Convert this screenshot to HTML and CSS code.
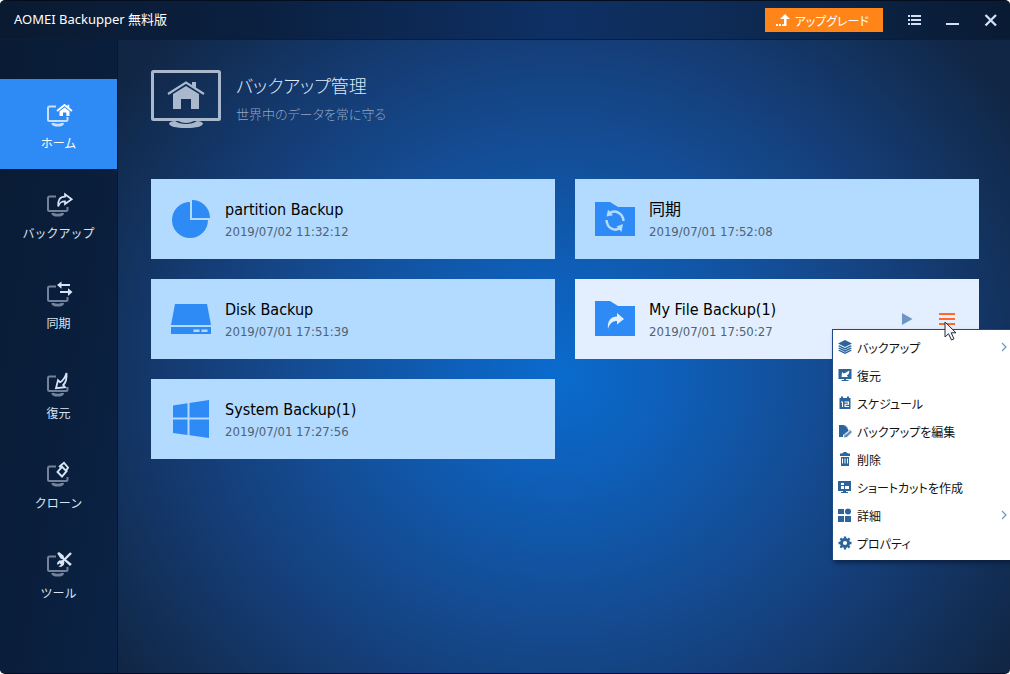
FILE: index.html
```
<!DOCTYPE html>
<html lang="ja">
<head>
<meta charset="utf-8">
<meta name="viewport" content="width=device-width, initial-scale=1">
<title>AOMEI Backupper 無料版</title>
<link rel="stylesheet" href="styles.css">
</head>
<body>
<svg class="defs" aria-hidden="true">
  <symbol id="screen" viewBox="-3 0 31 26">
    <path d="M10 4.5H3.500Q2 4.500 2 6V17.500Q2 19 3.500 19H20Q21.500 19 21.500 17.500V15" fill="none" stroke="currentColor" stroke-width="2"/>
    <path d="M5.200 21.500Q7 20.500 8 21Q11.700 22.500 15.400 21Q16.500 20.500 18.200 21.500Q17.500 24.600 11.700 24.600Q6 24.600 5.200 21.500Z" fill="currentColor"/>
  </symbol>
  <symbol id="chevron" viewBox="0 0 6 10"><path d="M1 1L5 5L1 9" fill="none" stroke="currentColor" stroke-width="1.2"/></symbol>
</svg>
<div class="window">
  <header class="titlebar">
    <h1 class="app-title">AOMEI Backupper 無料版</h1>
    <button class="upgrade" type="button">
      <svg width="14" height="12" viewBox="0 0 14 12" fill="currentColor"><path d="M9 0L14 5H10.500V12H6V10.300H8V5H4ZM0 10h2v2H0zM3 10h2v2H3z"/></svg>
      <span>アップグレード</span>
    </button>
    <div class="window-controls">
      <button type="button" aria-label="メニュー"><svg width="14" height="14" viewBox="0 0 14 14" fill="currentColor"><path d="M0 2h2v2H0zM3 2h10v2H3zM0 6h2v2H0zM3 6h10v2H3zM0 10h2v2H0zM3 10h10v2H3z"/></svg></button>
      <button type="button" aria-label="最小化"><svg width="14" height="14" viewBox="0 0 14 14" fill="currentColor"><path d="M0 10h13v2H0z"/></svg></button>
      <button type="button" aria-label="閉じる"><svg width="14" height="14" viewBox="0 0 14 14"><path d="M1.500 2L12 12.500M12 2L1.500 12.500" stroke="currentColor" stroke-width="2.300"/></svg></button>
    </div>
  </header>
  <nav class="sidebar">
    <a class="nav-item active" href="#home">
      <svg width="31" height="26" viewBox="-3 0 31 26"><use href="#screen" class="dim" x="-3" width="31" height="26"/>
        <path d="M11 9L18.500 3L26 9" fill="none" stroke="currentColor" stroke-width="1.800"/><path d="M13.500 9.300L18.500 5.400L23.500 9.300V14H20.300V10.500H17V14H13.500ZM21.500 2.800H23.300V6L21.500 5Z" fill="currentColor"/></svg>
      <span>ホーム</span>
    </a>
    <a class="nav-item" href="#backup">
      <svg width="31" height="26" viewBox="-3 0 31 26"><use href="#screen" class="dim" x="-3" width="31" height="26"/>
        <path d="M12.200 14.500C11.500 8 14 4.700 19 4.700V2.300L25.700 7.300L19 12V9.300C15 9.300 13.500 10.500 12.200 14.500Z" fill="none" stroke="currentColor" stroke-width="1.700"/></svg>
      <span>バックアップ</span>
    </a>
    <a class="nav-item" href="#sync">
      <svg width="31" height="26" viewBox="-3 0 31 26"><use href="#screen" class="dim" x="-3" width="31" height="26"/>
        <path d="M11 3L15.500 -.5V2H24V4H15.500V6.800ZM26.500 10L22 6.300V9H14V11H22V14Z" fill="currentColor"/></svg>
      <span>同期</span>
    </a>
    <a class="nav-item" href="#restore">
      <svg width="31" height="26" viewBox="-3 0 31 26"><use href="#screen" class="dim" x="-3" width="31" height="26"/>
        <path d="M20.500 1C21 8 20 10.500 17.200 13L19 15.200L10 16.200L12 8.200L14 10.200C17.500 8.500 19 6 20.500 1Z" fill="none" stroke="currentColor" stroke-width="1.800"/></svg>
      <span>復元</span>
    </a>
    <a class="nav-item" href="#clone">
      <svg width="31" height="26" viewBox="-3 0 31 26"><use href="#screen" class="dim" x="-3" width="31" height="26"/>
        <path d="M13 5L18 .8L22 5.500L20.300 8.500M16 4.800L20.500 9.200L16 14.500L11.500 10Z" fill="none" stroke="currentColor" stroke-width="1.900"/></svg>
      <span>クローン</span>
    </a>
    <a class="nav-item" href="#tools">
      <svg width="31" height="26" viewBox="-3 0 31 26"><use href="#screen" class="dim" x="-3" width="31" height="26"/>
        <path d="M25 1L15.500 10.500" stroke="currentColor" stroke-width="2.400"/><path d="M11.200 1.200L13 0L17.500 3.500L18.200 6L25.800 12L24 14L17 7.500L14.500 6.500ZM16.500 8.200L18.400 10.200L17.800 13L15 15L12.500 14.500L15 12.800L13.700 11.200L11.500 13L11 11L13 8.500Z" fill="currentColor"/></svg>
      <span>ツール</span>
    </a>
  </nav>
  <main class="content">
    <section class="intro">
      <svg width="70" height="60" viewBox="0 0 70 60">
        <rect x="1.500" y="1.500" width="67" height="48" rx="1" fill="none" stroke="currentColor" stroke-width="3"/>
        <path d="M18 53.500Q19 51 24 51Q28 54 35 54Q42 54 46 51Q51 51 52 53.500Q51 58 35 58Q19 58 18 53.500ZM27 51H43Q39 53 35 53Q31 53 27 51Z" fill="currentColor"/>
        <path d="M17 24L35 12.500L53 24" fill="none" stroke="currentColor" stroke-width="2.200"/>
        <path d="M22 24L35 16L48 24V39H40V29H30V39H22ZM41 12H45V18L41 15.500Z" fill="currentColor"/>
      </svg>
      <div>
        <h2 class="intro-title">バックアップ管理</h2>
        <p class="intro-sub">世界中のデータを常に守る</p>
      </div>
    </section>
    <section class="cards">
      <article class="card">
        <svg class="card-icon" width="42" height="42" viewBox="0 1 42 42"><path d="M20 5A18 18 0 1 0 38 23H20ZM22 3V21H40A18 18 0 0 0 22 3Z"/></svg>
        <div class="card-text"><h3 class="card-name">partition Backup</h3><time class="card-time">2019/07/02 11:32:12</time></div>
      </article>
      <article class="card">
        <svg class="card-icon" width="42" height="42" viewBox="0 1 42 42"><path d="M1 5H16L24 10H41V39H1Z"/><g fill="none" stroke="#b3daff" stroke-width="2.500"><path d="M15 16.500C21 12 29 16 29.500 24M12.500 23C13 31 20 35 27 31"/></g><path d="M12.500 19.500L14 12.500L19 18.200ZM29 27L27.500 35L22.500 29.500Z" class="card-fill"/></svg>
        <div class="card-text"><h3 class="card-name">同期</h3><time class="card-time">2019/07/01 17:52:08</time></div>
      </article>
      <article class="card">
        <svg class="card-icon" width="42" height="42" viewBox="0 1 42 42"><path d="M5 7H37L41 28H1ZM1 30H41V37H1Z"/><path d="M23.500 32.500h6v2.500h-6zM31.500 32.500h6v2.500h-6z" class="card-fill"/></svg>
        <div class="card-text"><h3 class="card-name">Disk Backup</h3><time class="card-time">2019/07/01 17:51:39</time></div>
      </article>
      <article class="card hovered">
        <svg class="card-icon" width="42" height="42" viewBox="0 1 42 42"><path d="M1 4H16L24 9H41V39H1Z"/><path d="M14 32C13 24 17 19.500 23 19.500V16L30 22L23 27.500V24C18.500 24 15.500 26.500 14 32Z" class="card-fill"/></svg>
        <div class="card-text"><h3 class="card-name">My File Backup(1)</h3><time class="card-time">2019/07/01 17:50:27</time></div>
        <div class="card-actions">
          <button class="run" type="button" aria-label="実行"><svg width="11" height="12" viewBox="0 0 11 12" fill="currentColor"><path d="M0 0L10.500 6L0 12Z"/></svg></button>
          <button class="more" type="button" aria-label="操作メニュー"><svg width="16" height="12" viewBox="0 0 16 12" fill="currentColor"><path d="M0 0h16v2H0zM0 5h16v2H0zM0 10h16v2H0z"/></svg></button>
        </div>
        <div class="menu" role="menu">
          <button type="button" role="menuitem"><svg width="14" height="14" viewBox="0 0 14 14"><path d="M7 0L14 3.500L7 7L0 3.500ZM0 6L1.500 5.300L7 8L12.500 5.300L14 6L7 9.700ZM0 8.300L1.500 7.600L7 10.300L12.500 7.600L14 8.300L7 12ZM0 10.500L1.500 9.800L7 12.500L12.500 9.800L14 10.500L7 14Z"/></svg><span>バックアップ</span><svg class="chev" width="6" height="10"><use href="#chevron"/></svg></button>
          <button type="button" role="menuitem"><svg width="14" height="14" viewBox="0 0 14 14"><path d="M.5 1H13.500V11H8V12H10.500V13H3.500V12H6V11H.5Z"/><path d="M11.500 2.500Q11.500 6 8.800 7.500L10 9H3.500L4 4L5.800 5.500L7 5Z" class="hole"/></svg><span>復元</span></button>
          <button type="button" role="menuitem"><svg width="14" height="14" viewBox="0 0 14 14"><path d="M1.500 2H3V.5H5V2H9V.5H11V2H12.500V13H1.500Z"/><path d="M3 5.500H5V11H4V6.500H3ZM6.500 5.500H11V8.700H7.700V10H11V11H6.500V7.700H9.800V6.500H6.500Z" class="hole"/></svg><span>スケジュール</span></button>
          <button type="button" role="menuitem"><svg width="14" height="14" viewBox="0 0 14 14"><path d="M1 1H6L10 5V7L5 11V13H1Z"/><path d="M7 1L10 4H7Z" opacity=".65"/><path d="M6 13.500L6.500 10.500L11.500 5.500L14 8L9 13Z" opacity=".75"/><path d="M7.500 10.500L12 6.500" class="scratch"/></svg><span>バックアップを編集</span></button>
          <button type="button" role="menuitem"><svg width="14" height="14" viewBox="0 0 14 14"><path d="M4 1.500L6 0H8L10 1.500H12V4H2V1.500ZM3 5H11V14H3Z"/><path d="M4.500 6.500v5M7 6.500v5M9.500 6.500v5" class="scratch"/></svg><span>削除</span></button>
          <button type="button" role="menuitem"><svg width="14" height="14" viewBox="0 0 14 14"><path d="M0 1H13V11H8V12H10V13H3V12H5V11H0Z"/><path d="M3 3h3v2H3zM3 6h3v3H3zM7 6h4v3H7z" class="hole"/></svg><span>ショートカットを作成</span></button>
          <button type="button" role="menuitem"><svg width="14" height="14" viewBox="0 0 14 14"><path d="M0 1h6v5H0zM0 8h6v6H0zM7 8h6v6H7z"/><circle cx="10" cy="3.500" r="3"/></svg><span>詳細</span><svg class="chev" width="6" height="10"><use href="#chevron"/></svg></button>
          <button type="button" role="menuitem"><svg width="14" height="14" viewBox="0 0 14 14"><circle cx="7" cy="7" r="3.600" fill="none" stroke="currentColor" stroke-width="3"/><path d="M7 .5V3M7 11V13.500M.5 7H3M11 7H13.500M2.400 2.400L4 4M10 10L11.600 11.600M2.400 11.600L4 10M10 4L11.600 2.400" stroke="currentColor" stroke-width="2.300"/></svg><span>プロパティ</span></button>
        </div>
        <svg class="pointer" width="14" height="21" viewBox="0 0 14 21" aria-hidden="true"><path d="M1 1V16L4.500 12.800L7.500 19L10 17.800L7.200 11.800H12Z" fill="#f4f4f6" stroke="#222a3a" stroke-width="1"/></svg>
      </article>
      <article class="card">
        <svg class="card-icon" width="42" height="42" viewBox="0 1 42 42"><path d="M3 8.500L17.500 6.300V20.500H3ZM19.500 6L39 3V20.500H19.500ZM3 22.500H17.500V38L3 36ZM19.500 22.500H39V41L19.500 38.300Z"/></svg>
        <div class="card-text"><h3 class="card-name">System Backup(1)</h3><time class="card-time">2019/07/01 17:27:56</time></div>
      </article>
    </section>
  </main>
</div>
</body>
</html>
```
FILE: styles.css
```
* { box-sizing: border-box; }

body {
  margin: 0;
  background: #fff;
  font-family: "DejaVu Sans Condensed", "Noto Sans CJK JP", sans-serif;
  color: #fff;
}

h1, h2, h3, p { margin: 0; font-weight: 400; }

button {
  margin: 0;
  padding: 0;
  border: 0;
  background: none;
  color: inherit;
  font: inherit;
  cursor: pointer;
}

svg { display: block; flex: none; overflow: visible; }
.defs { position: absolute; width: 0; height: 0; }

.window {
  display: grid;
  grid-template: 39px 1fr / 118px 1fr;
  min-height: 100vh;
  overflow: hidden;
  border: solid #030d1e;
  border-width: 1px 0;
  border-radius: 5px;
  background: radial-gradient(ellipse 540px 500px at 560px 375px, #0a6bcd 0%, #0e5fb9 20%, #144c93 48%, #153c74 70%, #122f57 88%, #112645 100%);
}

.titlebar {
  grid-column: 1 / -1;
  display: flex;
  align-items: center;
  padding: 0 12px 0 14px;
  border-bottom: 1px solid #0a1d3a;
  background: linear-gradient(90deg, #0a1a30 0%, #0b2040 25%, #0e3064 55%, #0e2c58 70%, #0b2140 88%, #091a33 100%);
}

.app-title {
  flex: 1;
  padding-bottom: 3px;
  font: 13px/20px "Noto Sans", "Noto Sans CJK JP", sans-serif;
}

.upgrade {
  display: flex;
  align-items: center;
  gap: 5px;
  height: 24px;
  padding: 0 14px 0 11px;
  background: #ff8519;
  font-size: 12px;
  font-feature-settings: "palt";
}

.window-controls {
  display: flex;
  gap: 24px;
  margin-left: 25px;
  color: #d3e1f6;
}

.sidebar {
  padding-top: 39px;
  border-right: 1px solid #08172e;
  background: linear-gradient(100deg, #091b34 0%, #0a1f3d 60%, #0a2346 100%);
}

.nav-item {
  display: flex;
  flex-direction: column;
  align-items: center;
  gap: 6px;
  height: 90px;
  padding-top: 23px;
  color: #d8e4f5;
  font-size: 12px;
  line-height: 20px;
  text-decoration: none;
}

.nav-item .dim { color: #73839b; }
.nav-item.active { background: #2e8bf5; color: #fff; }
.nav-item.active .dim { color: #c9e0fd; }

.content { padding: 30px 31px 30px 33px; }

.intro {
  display: flex;
  gap: 15px;
  color: #aab8cd;
}

.intro-title {
  padding-top: 2px;
  color: #dce8f8;
  font-size: 18px;
  font-weight: 300;
  line-height: 30px;
  font-feature-settings: "palt";
}

.intro-sub {
  color: #92a5c3;
  font-size: 13px;
  font-weight: 300;
  line-height: 26px;
  font-feature-settings: "palt";
}

.cards {
  display: grid;
  grid-template-columns: 1fr 1fr;
  gap: 20px;
  margin-top: 49px;
}

.card {
  --surface: #b3daff;
  position: relative;
  display: flex;
  align-items: center;
  gap: 13px;
  min-height: 80px;
  padding: 0 24px 0 19px;
  background: var(--surface);
  color: #000;
}

.card.hovered { --surface: #e3efff; }
.card-icon { fill: #2e8bf5; }
.card-fill { fill: var(--surface); }

.card-text { padding-top: 3px; }
.card-name { font-size: 16px; line-height: 22px; }

.card-time {
  display: block;
  color: #4f6374;
  font-size: 13px;
  line-height: 22px;
}

.card-actions {
  display: flex;
  gap: 26px;
  margin-left: auto;
}

.run { color: #6c96c4; }
.more { color: #ff6a2b; }

.menu {
  position: absolute;
  top: 50px;
  right: -31px;
  z-index: 1;
  width: 178px;
  padding: 3px 0;
  border: solid #1d4a80;
  border-width: 1px 0 0 1px;
  background: #fff;
  box-shadow: 2px 3px 4px #06162e99;
  color: #111;
  font-size: 12px;
}

.menu button {
  display: flex;
  align-items: center;
  gap: 5px;
  width: 100%;
  height: 28px;
  padding: 0 3px 0 5px;
  text-align: left;
  font-feature-settings: "palt";
}

.menu svg { fill: #2c659d; color: #2c659d; }
.menu .hole { fill: #fff; }
.menu .scratch { stroke: #fff; }
.menu .chev { margin-left: auto; color: #6c96c4; }

.pointer {
  position: absolute;
  top: 42px;
  right: 21px;
  z-index: 2;
}
```
